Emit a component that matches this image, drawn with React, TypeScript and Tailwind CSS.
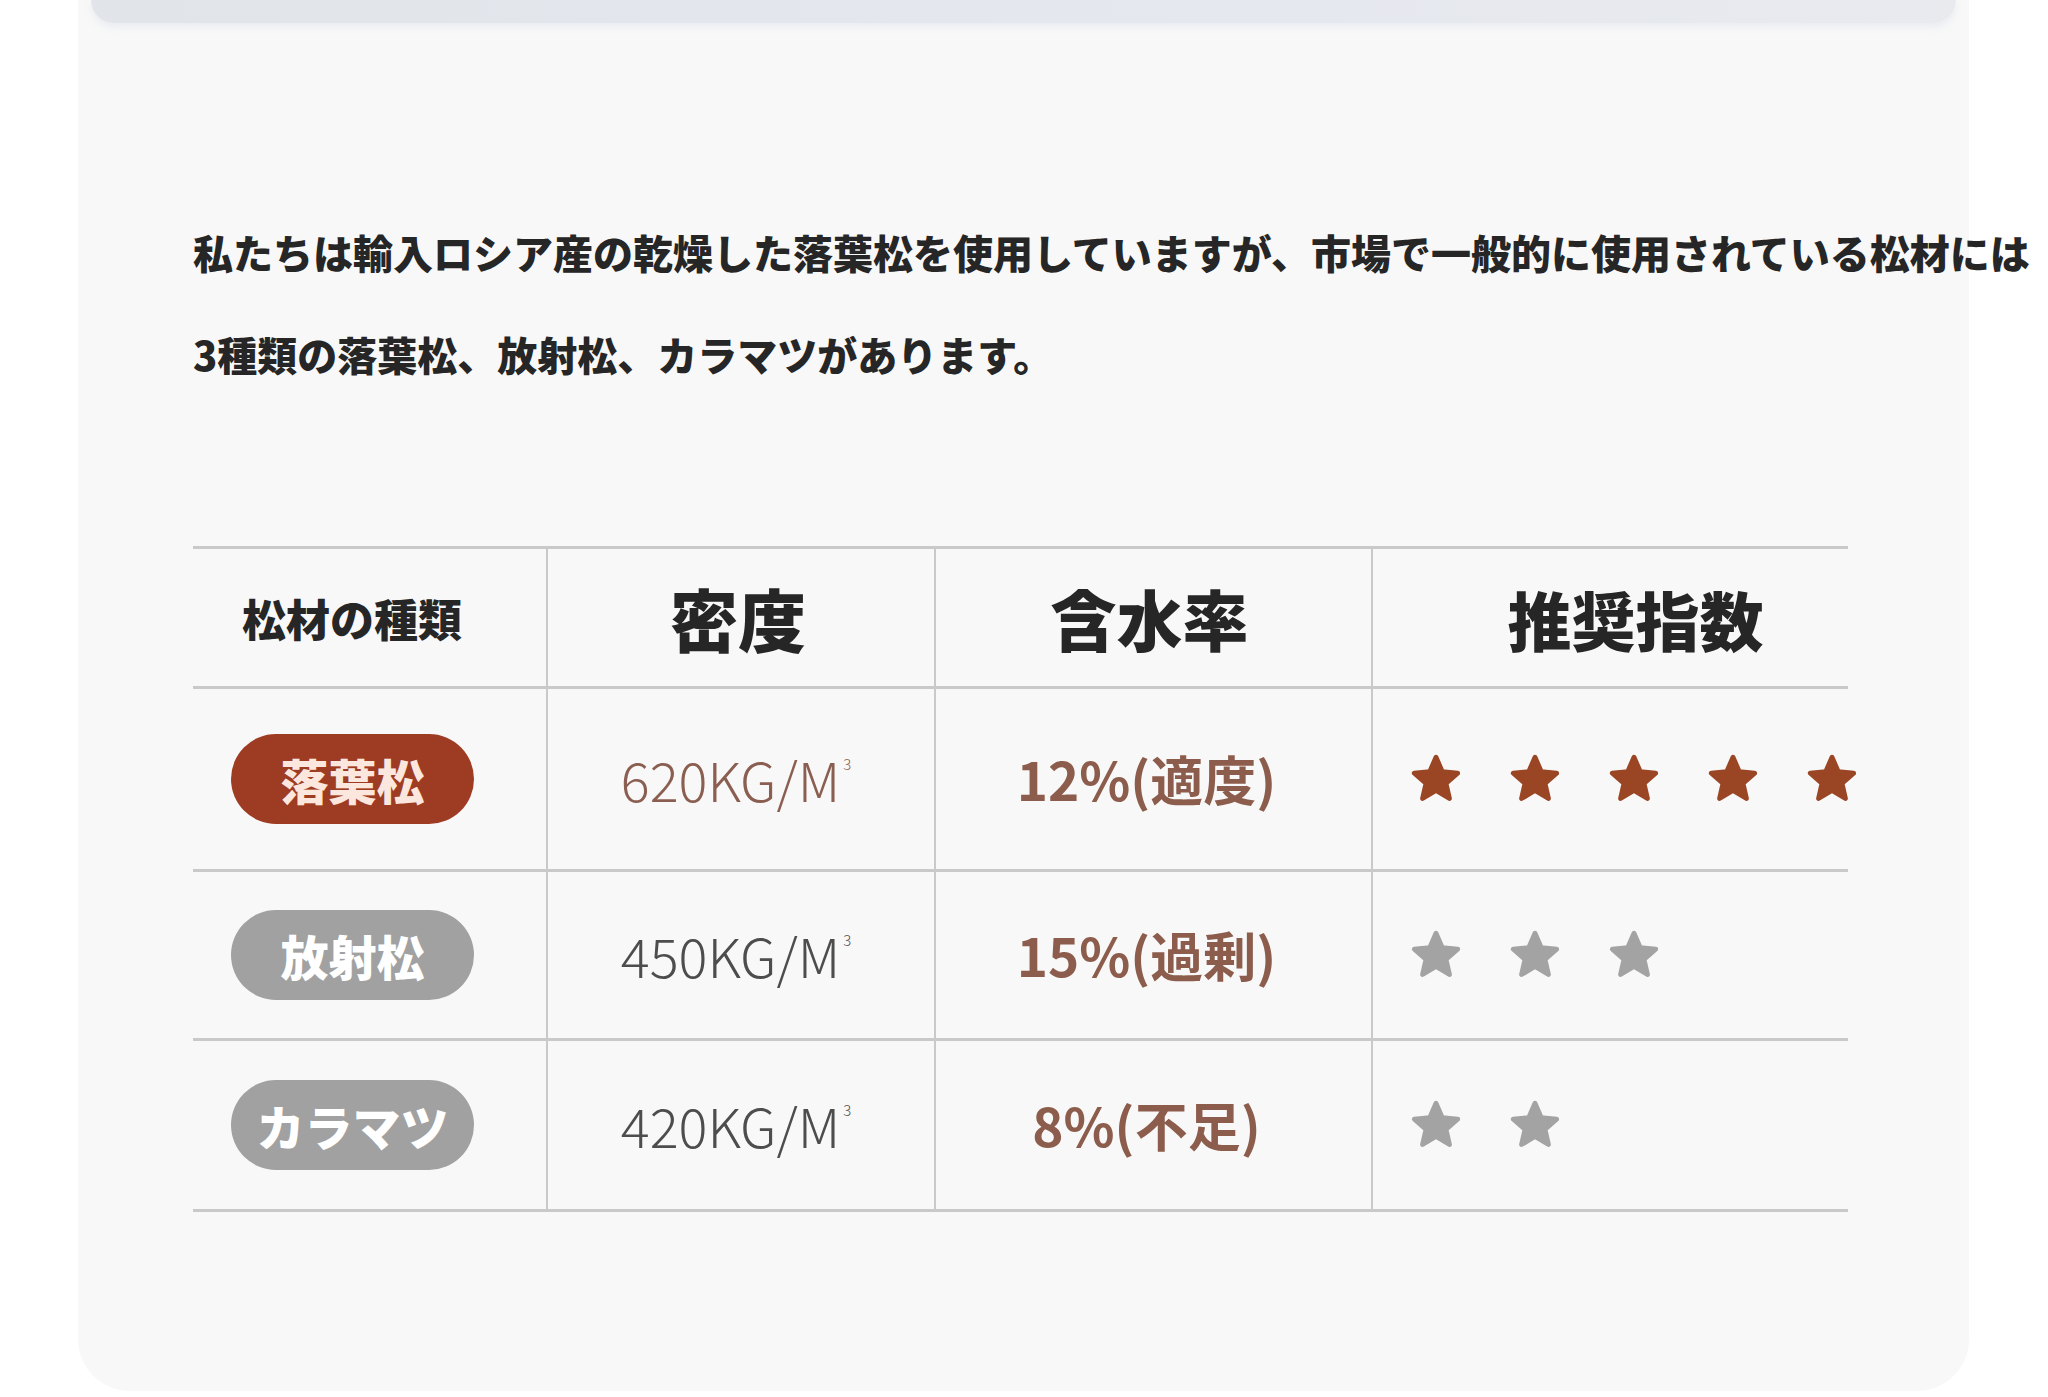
import React from 'react';

const jp = { fontFamily: '"Noto Sans CJK JP", "Noto Sans", sans-serif' };

type Row = {
  name: string;
  active: boolean;
  density: string;
  moisture: string;
  stars: number;
};

const rows: Row[] = [
  { name: '落葉松', active: true, density: '620KG/M', moisture: '12%(適度)', stars: 5 },
  { name: '放射松', active: false, density: '450KG/M', moisture: '15%(過剰)', stars: 3 },
  { name: 'カラマツ', active: false, density: '420KG/M', moisture: '8%(不足)', stars: 2 },
];

const rowHeights = ['h-[183px]', 'h-[169px]', 'h-[174px]'];

const Star = ({ color }: { color: string }) => (
  <svg width="52" height="52" viewBox="0 0 48 48" className="shrink-0">
    <path
      d="M24 4 L29.8 17.2 L44 18.6 L33.2 28 L36.4 42 L24 34.6 L11.6 42 L14.8 28 L4 18.6 L18.2 17.2 Z"
      fill={color}
      stroke={color}
      strokeWidth="4.5"
      strokeLinejoin="round"
    />
  </svg>
);

const App = () => {
  return (
    <div className="w-full h-[1397px] bg-white overflow-hidden" style={jp}>
      <div className="ml-[78px] w-[1891px] h-[1391px] bg-[#f8f8f8] rounded-b-[52px]">
        <div className="mx-[13px] h-[23px] rounded-b-[44px] bg-gradient-to-r from-[#e1e4e8] via-[#e4e7ee] to-[#e8eaee] shadow-[0_4px_6px_rgba(220,225,235,0.5)]" />

        <div className="mt-[178px] pl-[115px] whitespace-nowrap text-[40px] leading-[102px] font-black text-[#262626]">
          <p>私たちは輸入ロシア産の乾燥した落葉松を使用していますが、市場で一般的に使用されている松材には</p>
          <p>3種類の落葉松、放射松、カラマツがあります。</p>
        </div>

        <div className="mt-[141px] ml-[115px] w-[1655px]">
          <div className="grid grid-cols-[353px_388px_437px_477px] h-[140px] border-t-[3px] border-[#c9c9c9]">
            <div className="flex items-center pl-[49px] text-[44px] font-black text-[#262626]">松材の種類</div>
            <div className="flex items-center justify-center pr-[6px] border-l-2 border-[#c9c9c9] text-[68px] font-black text-[#262626]">密度</div>
            <div className="flex items-center justify-center pr-[8px] border-l-2 border-[#c9c9c9] text-[66px] font-black text-[#262626]">含水率</div>
            <div className="flex items-center justify-center pl-[50px] border-l-2 border-[#c9c9c9] text-[64px] font-black text-[#262626]">推奨指数</div>
          </div>

          {rows.map((r, i) => (
            <div
              key={r.name}
              className={`grid grid-cols-[353px_388px_437px_477px] ${rowHeights[i]} border-t-[3px] border-[#c9c9c9] ${i === rows.length - 1 ? 'border-b-[3px]' : ''}`}
            >
              <div className="flex items-center pl-[38px]">
                <div
                  className={`w-[243px] h-[90px] rounded-full flex items-center justify-center text-[48px] font-black ${
                    r.active ? 'bg-[#9e3b23] text-[#fbe7de]' : 'bg-[#a1a1a1] text-white'
                  }`}
                >
                  {r.name}
                </div>
              </div>
              <div
                className={`flex items-center justify-center pr-[10px] border-l-2 border-[#c9c9c9] text-[54px] font-light ${
                  r.active ? 'text-[#8a5e50]' : 'text-[#4d4d4d]'
                }`}
              >
                <span className="flex items-start leading-none">
                  {r.density}
                  <span className="text-[15px] leading-none mt-[4px] ml-[3px]">3</span>
                </span>
              </div>
              <div className="flex items-center justify-center pr-[14px] border-l-2 border-[#c9c9c9] text-[53px] font-bold text-[#8c5d4c]">
                {r.moisture}
              </div>
              <div className="flex items-center gap-[47px] pl-[37px] border-l-2 border-[#c9c9c9]">
                {Array.from({ length: r.stars }).map((_, k) => (
                  <Star key={k} color={r.active ? '#9a4524' : '#a3a3a3'} />
                ))}
              </div>
            </div>
          ))}
        </div>
      </div>
    </div>
  );
};

export default App;
